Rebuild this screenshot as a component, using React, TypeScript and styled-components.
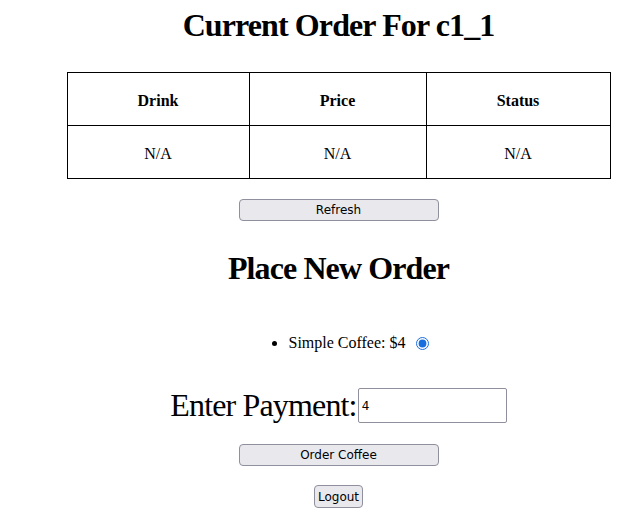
import React from 'react'
import styled, { createGlobalStyle } from 'styled-components'

const GlobalStyle = createGlobalStyle`
  html, body {
    margin: 0;
    padding: 0;
    background: #ffffff;
  }
  body {
    font-family: "Liberation Serif", "Times New Roman", serif;
    color: #000000;
  }
`

const Page = styled.div`
  display: flex;
  flex-direction: column;
  align-items: center;
  padding: 7px 0 0 40px;
`

const Title = styled.h1<{ $gap: number }>`
  margin: 0 0 ${({ $gap }) => $gap}px;
  font-size: 32px;
  font-weight: bold;
  line-height: 37px;
  letter-spacing: -0.9px;
`

const OrderTable = styled.table`
  width: 543px;
  border-collapse: collapse;
  margin-bottom: 20px;
  table-layout: fixed;
`

const Cell = styled.td<{ $head?: boolean }>`
  border: 1px solid #000000;
  padding: 3px 0 0;
  height: 49px;
  text-align: center;
  font-size: 16px;
  font-weight: ${({ $head }) => ($head ? 'bold' : 'normal')};
`

const WideButton = styled.button<{ $gap: number }>`
  width: 200px;
  height: 22px;
  margin-bottom: ${({ $gap }) => $gap}px;
  padding: 0;
  border: 1px solid #8f8f9d;
  border-radius: 4px;
  background: #e9e9ed;
  font-family: "DejaVu Sans", "Liberation Sans", sans-serif;
  font-size: 12px;
  color: #000000;
`

const SmallButton = styled(WideButton)`
  width: auto;
  height: 23px;
  padding: 0 3px;
`

const MenuList = styled.ul`
  margin: 0 0 35px;
  padding: 0 0 0 40px;
  font-size: 16px;
  line-height: 18px;
`

const MenuItem = styled.li`
  text-align: center;
`

const Radio = styled.input`
  margin: 0 0 0 10px;
  width: 13px;
  height: 13px;
  vertical-align: -2px;
  accent-color: #1a6fdf;
`

const PaymentRow = styled.div`
  display: flex;
  align-items: flex-end;
  margin-bottom: 20px;
`

const PaymentLabel = styled.label`
  font-size: 32px;
  line-height: 37px;
  letter-spacing: -0.85px;
`

const PaymentInput = styled.input`
  box-sizing: border-box;
  width: 149px;
  height: 35px;
  margin: 0 0 1px 1px;
  padding: 0 3px;
  border: 1px solid #8f8f9d;
  border-radius: 2px;
  font-family: "DejaVu Sans", "Liberation Sans", sans-serif;
  font-size: 12px;
`

export default function App() {
  return (
    <>
      <GlobalStyle />
      <Page>
        <Title $gap={28}>Current Order For c1_1</Title>
        <OrderTable>
          <colgroup>
            <col style={{ width: 182 }} />
            <col style={{ width: 177 }} />
            <col style={{ width: 184 }} />
          </colgroup>
          <tbody>
            <tr>
              <Cell $head>Drink</Cell>
              <Cell $head>Price</Cell>
              <Cell $head>Status</Cell>
            </tr>
            <tr>
              <Cell>N/A</Cell>
              <Cell>N/A</Cell>
              <Cell>N/A</Cell>
            </tr>
          </tbody>
        </OrderTable>
        <WideButton $gap={29}>Refresh</WideButton>
        <Title $gap={47}>Place New Order</Title>
        <MenuList>
          <MenuItem>
            Simple Coffee: $4
            <Radio type="radio" name="drink" defaultChecked />
          </MenuItem>
        </MenuList>
        <PaymentRow>
          <PaymentLabel htmlFor="payment">Enter Payment:</PaymentLabel>
          <PaymentInput id="payment" type="text" defaultValue="4" />
        </PaymentRow>
        <WideButton $gap={19}>Order Coffee</WideButton>
        <SmallButton $gap={0}>Logout</SmallButton>
      </Page>
    </>
  )
}
